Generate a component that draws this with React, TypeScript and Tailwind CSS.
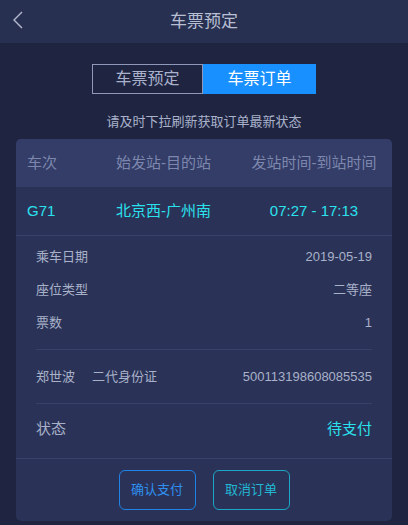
import React from "react";

const font = { fontFamily: '"Liberation Sans", "Noto Sans CJK SC", sans-serif' };

function DetailRow({ label, value }: { label: string; value: string }) {
  return (
    <div className="flex h-[33px] items-center justify-between text-[13px] text-[#a9b1c9]">
      <span>{label}</span>
      <span>{value}</span>
    </div>
  );
}

export default function App() {
  return (
    <div className="min-h-[525px] w-full bg-[#1f2541]" style={font}>
      {/* Header */}
      <div className="relative flex h-[43px] items-center justify-center bg-[#283051]">
        <svg
          className="absolute left-[12px] top-[11px]"
          width="12"
          height="18"
          viewBox="0 0 12 18"
          fill="none"
        >
          <polyline points="10,1 2,9 10,17" stroke="#b4bbd0" strokeWidth="1.4" />
        </svg>
        <span className="text-[17px] text-[#b8bfd3]">车票预定</span>
      </div>

      {/* Tabs */}
      <div className="mt-[21px] flex justify-center">
        <div className="flex h-[30px] w-[224px]">
          <div className="flex w-[111px] items-center justify-center border border-[#8f98b8] text-[16px] text-[#a9b1cc]">
            车票预定
          </div>
          <div className="flex flex-1 items-center justify-center bg-[#1890ff] text-[16px] text-white">
            车票订单
          </div>
        </div>
      </div>

      {/* Hint */}
      <div className="mt-[19px] text-center text-[13px] leading-[18px] text-[#aab2cb]">
        请及时下拉刷新获取订单最新状态
      </div>

      {/* Card */}
      <div className="mx-4 mt-[8px] overflow-hidden rounded-[5px] bg-[#2a3357]">
        <div className="flex h-[48px] items-center bg-[#333d68] pl-[11px] text-[15px] text-[#7d87ad]">
          <div className="w-[89px]">车次</div>
          <div className="w-[120px]">始发站-目的站</div>
          <div className="flex-1 text-center">发站时间-到站时间</div>
        </div>
        <div className="flex h-[49px] items-center border-b border-[#37426b] pl-[11px] text-[15px] text-[#2ae2ee]">
          <div className="w-[89px]">G71</div>
          <div className="w-[120px]">北京西-广州南</div>
          <div className="flex-1 text-center">07:27 - 17:13</div>
        </div>

        <div className="px-5">
          <div className="border-b border-[#37426b] pb-[10px] pt-[4px]">
            <DetailRow label="乘车日期" value="2019-05-19" />
            <DetailRow label="座位类型" value="二等座" />
            <DetailRow label="票数" value="1" />
          </div>
          <div className="flex h-[54px] items-center justify-between border-b border-[#37426b] text-[13px] text-[#a9b1c9]">
            <div className="flex gap-[17px]">
              <span>郑世波</span>
              <span>二代身份证</span>
            </div>
            <span>500113198608085535</span>
          </div>
          <div className="flex h-[54px] items-center justify-between pb-[4px] text-[15px]">
            <span className="text-[#a9b1c9]">状态</span>
            <span className="text-[#2ae2ee]">待支付</span>
          </div>
        </div>

        <div className="flex justify-center gap-[17px] border-t border-[#37426b] pb-[11px] pt-[11px]">
          <button className="flex h-[40px] w-[77px] items-center justify-center rounded-[6px] border border-[#1f82e6] text-[13px] text-[#2f8ff0]">
            确认支付
          </button>
          <button className="flex h-[40px] w-[77px] items-center justify-center rounded-[6px] border border-[#1aa6c4] text-[13px] text-[#22b8d4]">
            取消订单
          </button>
        </div>
      </div>
    </div>
  );
}
